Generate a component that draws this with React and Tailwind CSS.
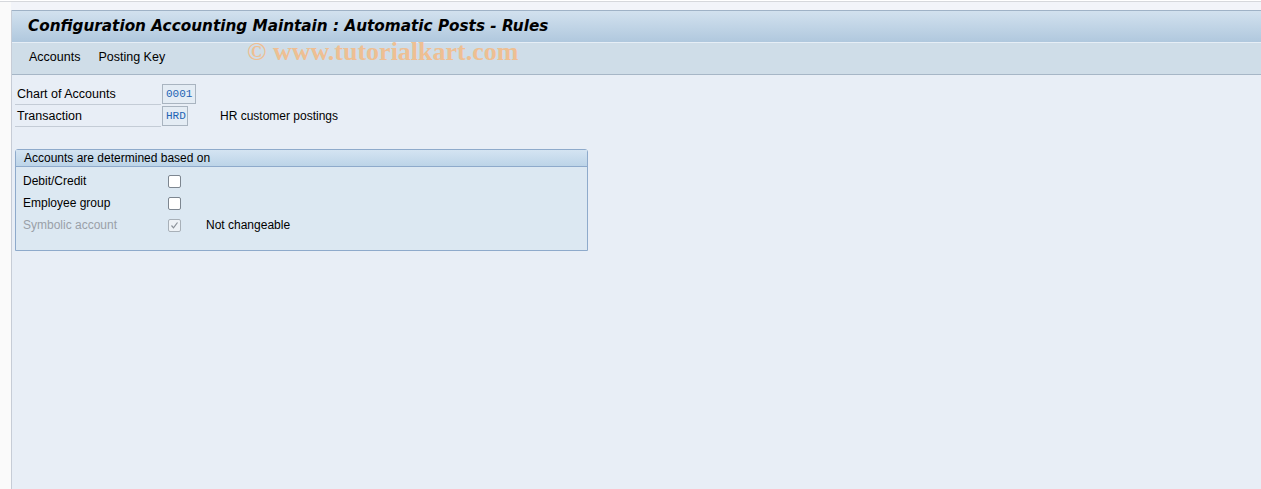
import React from 'react';

const font = { fontFamily: '"Liberation Sans", Arial, sans-serif' };

function FieldRow({ label, value, width, desc }) {
    return (
        <div className="flex items-center h-[22px]">
            <div className="w-[146px] h-[21px] ml-[3px] border-b border-[#c4ccd6] flex items-center pl-[2px] pt-[2px] text-[12.5px] text-black">
                {label}
            </div>
            <div
                className={`${width} h-[20px] ml-[1px] border border-[#a9b4c0] bg-[#e4ecf4] flex items-center pl-[3px] text-[11px] text-[#1e64b4]`}
                style={{ fontFamily: '"Liberation Mono", "DejaVu Sans Mono", monospace' }}
            >
                {value}
            </div>
            {desc && <div className="ml-[32px] text-[12px] text-black">{desc}</div>}
        </div>
    );
}

function Check({ checked, disabled }) {
    return (
        <div className={`w-[13px] h-[13px] rounded-[2px] border ${disabled ? 'border-[#a8b0b8] bg-[#eef2f6]' : 'border-[#7d8690] bg-white'} flex items-center justify-center`}>
            {checked && (
                <svg width="9" height="9" viewBox="0 0 9 9">
                    <path d="M1.5 4.5 L3.5 6.8 L7.5 1.5" fill="none" stroke="#8a9098" strokeWidth="1.2" />
                </svg>
            )}
        </div>
    );
}

function CheckRow({ label, checked, disabled, note }) {
    return (
        <div className="flex items-center h-[22px] pl-[7px] text-[12px]">
            <div className={`w-[145px] ${disabled ? 'text-[#9aa0a8]' : 'text-black'}`}>{label}</div>
            <Check checked={checked} disabled={disabled} />
            {note && <div className="ml-[25px] text-black">{note}</div>}
        </div>
    );
}

export default function App() {
    return (
        <div className="w-[1261px] h-[489px] bg-[#fafafa] flex flex-col overflow-hidden" style={font}>
            <div className="h-[1px] bg-white" />
            <div className="h-[1px] bg-[#d6d8dc]" />
            <div className="h-[8px] bg-[#f2f4f9] ml-[11px]" />
            <div className="flex-1 ml-[11px] border-l border-[#c6ccd6] flex flex-col bg-[#e8eef6]">
                {/* title bar */}
                <div className="h-[32px] border-t border-[#9fb2c6] bg-gradient-to-b from-[#d2e1ee] to-[#b0c8de] flex items-center pl-[16px] pb-[1px]">
                    <span className="font-bold italic text-black" style={{ fontFamily: '"DejaVu Sans", Verdana, sans-serif', fontSize: '15.25px' }}>
                        Configuration Accounting Maintain : Automatic Posts - Rules
                    </span>
                </div>
                {/* menu bar */}
                <div className="h-[33px] border-t border-[#e6eef6] border-b border-b-[#a6b6c6] bg-[#cfdde8] flex items-center pl-[17px] pb-[2px] text-[12.5px] text-black relative">
                    <span>Accounts</span>
                    <span className="ml-[18px]">Posting Key</span>
                    <span
                        className="absolute left-[235px] top-[-6px] leading-[30px] text-[26px] font-bold text-[#f2bc8a] opacity-90"
                        style={{ fontFamily: '"Liberation Serif", "Times New Roman", serif' }}
                    >
                        © www.tutorialkart.com
                    </span>
                </div>
                {/* fields */}
                <div className="pt-[8px] flex flex-col">
                    <FieldRow label="Chart of Accounts" value="0001" width="w-[34px]" />
                    <FieldRow label="Transaction" value="HRD" width="w-[26px]" desc="HR customer postings" />
                </div>
                {/* group box */}
                <div className="mt-[22px] ml-[3px] w-[573px] h-[102px] border border-[#8eaacb] rounded-t-[3px] bg-[#dce8f2] flex flex-col">
                    <div className="h-[17px] border-b border-[#8eaacb] bg-gradient-to-b from-[#d4e4f2] to-[#bcd4e8] flex items-center pl-[8px] text-[12px] text-black">
                        Accounts are determined based on
                    </div>
                    <div className="pt-[3px] flex flex-col">
                        <CheckRow label="Debit/Credit" />
                        <CheckRow label="Employee group" />
                        <CheckRow label="Symbolic account" checked disabled note="Not changeable" />
                    </div>
                </div>
            </div>
        </div>
    );
}
